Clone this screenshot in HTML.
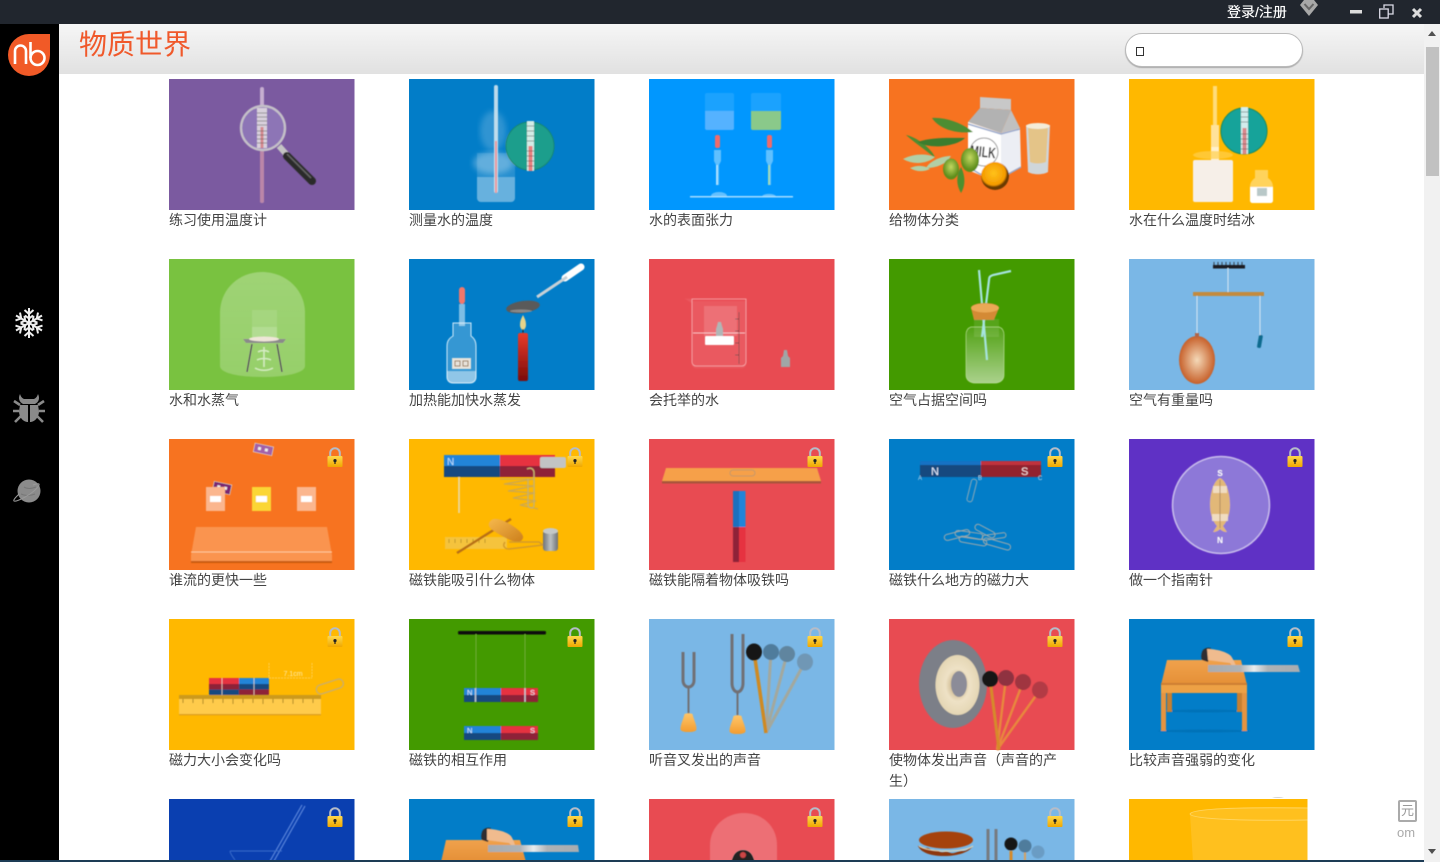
<!DOCTYPE html>
<html lang="zh-CN"><head><meta charset="utf-8"><title>物质世界</title>
<style>
html,body{margin:0;padding:0;width:1440px;height:862px;overflow:hidden;background:#fff}
svg.a{position:absolute;left:0;top:0}
.l{position:absolute;width:172px;font:14px/21px "Liberation Sans","Noto Sans CJK SC",sans-serif;color:#444}
.l b{font-weight:normal;font-family:"Noto Sans CJK TC",sans-serif}
.t{position:absolute;font:28px/36px "Liberation Sans","Noto Sans CJK SC",sans-serif;color:#f0592b;left:79px;top:27px}
.u{position:absolute;font:14px/20px "Liberation Sans","Noto Sans CJK SC",sans-serif;color:#fff;left:1227px;top:2px;text-shadow:0 0 .5px #fff}
.s{position:absolute;left:1125px;top:33px;width:176px;height:32px;background:#fff;border:1px solid #bbb;border-radius:17px;box-shadow:0 1px 1px #aaa}
.s i{position:absolute;left:10px;top:13px;width:6px;height:7px;border:1px solid #333}
.w{position:absolute;left:1398px;top:800px;width:15px;height:18px;border:2px solid #aaa;border-radius:2px;font:13px/18px "Liberation Sans","Noto Sans CJK SC",sans-serif;color:#999;text-align:center}
.o{position:absolute;left:1397px;top:825px;font:13px/16px "Liberation Sans",sans-serif;color:#aaa}
</style></head><body>
<svg class="a" width="1440" height="862" viewBox="0 0 1440 862" xmlns="http://www.w3.org/2000/svg">
<defs>
<filter id="s"><feGaussianBlur stdDeviation=".45"/></filter>
<linearGradient id="hd" x1="0" y1="0" x2="0" y2="1"><stop offset="0" stop-color="#f6f6f6"/><stop offset="1" stop-color="#e1e1e1"/></linearGradient>
<linearGradient id="gold" x1="0" y1="0" x2="0" y2="1"><stop offset="0" stop-color="#ffd84a"/><stop offset="1" stop-color="#f0a800"/></linearGradient>
<linearGradient id="tbl" x1="0" y1="0" x2="0" y2="1"><stop offset="0" stop-color="#f0a24c"/><stop offset="1" stop-color="#e48f36"/></linearGradient>
<linearGradient id="gl" x1="0" y1="0" x2="0" y2="1"><stop offset="0" stop-color="#fff" stop-opacity=".08"/><stop offset="1" stop-color="#fff" stop-opacity=".55"/></linearGradient>
<linearGradient id="can" x1="0" y1="0" x2="0" y2="1"><stop offset="0" stop-color="#e83b2c"/><stop offset="1" stop-color="#7a0c08"/></linearGradient>
<linearGradient id="dome" x1="0" y1="0" x2="0" y2="1"><stop offset="0" stop-color="#fff" stop-opacity=".28"/><stop offset="1" stop-color="#fff" stop-opacity=".22"/></linearGradient>
<linearGradient id="rul" x1="0" y1="0" x2="1" y2="0"><stop offset="0" stop-color="#a8acb0"/><stop offset=".35" stop-color="#aeb2b6"/><stop offset=".5" stop-color="#e8ecee"/><stop offset=".65" stop-color="#aeb2b6"/><stop offset="1" stop-color="#a8acb0"/></linearGradient>
<linearGradient id="sil" x1="0" y1="0" x2="1" y2="0"><stop offset="0" stop-color="#6e7276"/><stop offset=".5" stop-color="#bcc0c2"/><stop offset="1" stop-color="#6e7276"/></linearGradient>
<linearGradient id="rol" x1="0" y1="0" x2="1" y2="1"><stop offset="0" stop-color="#f6b84c"/><stop offset="1" stop-color="#cc7f1c"/></linearGradient>
<linearGradient id="bs" x1="0" y1="0" x2="0" y2="1"><stop offset="0" stop-color="#ffc56a"/><stop offset="1" stop-color="#f39d30"/></linearGradient>
<radialGradient id="bal"><stop offset="0" stop-color="#f4d9b8"/><stop offset="1" stop-color="#c7602a"/></radialGradient>
<radialGradient id="org" cx=".45" cy=".4"><stop offset="0" stop-color="#ffc21a"/><stop offset=".85" stop-color="#f59a00"/><stop offset="1" stop-color="#6b3a00"/></radialGradient>
<radialGradient id="olv" cx=".5" cy=".4"><stop offset="0" stop-color="#c3d860"/><stop offset="1" stop-color="#5e8e1c"/></radialGradient>
<radialGradient id="gng"><stop offset="0" stop-color="#b89c68"/><stop offset=".55" stop-color="#eee2c6"/><stop offset="1" stop-color="#e4d6b4"/></radialGradient>
<filter id="b1"><feGaussianBlur stdDeviation="3"/></filter>
<symbol id="lk" viewBox="0 0 16 20" width="16" height="20" overflow="visible">
<path d="M3.2 10V6a4.8 4.8 0 0 1 9.6 0v4" fill="none" stroke="#b5bcc8" stroke-width="2"/>
<rect x="0.5" y="9" width="15" height="11" rx="1" fill="url(#gold)"/>
<circle cx="8" cy="13.6" r="1.6" fill="#222"/><rect x="7.4" y="14" width="1.2" height="3" fill="#222"/>
</symbol>
<g id="arm"><path d="M0 0V-15M-4.500-13L0-9L4.500-13M-4-7.500L0-4.500L4-7.500" fill="none" stroke="#eee" stroke-width="2"/></g>
</defs>

<rect x="59" y="24" width="1365" height="50" fill="url(#hd)"/>
<rect width="1440" height="24" fill="#21262e"/>
<rect y="24" width="59" height="838" fill="#000"/>
<rect x="1424" y="24" width="16" height="838" fill="#f1f1f1"/>
<rect x="1426" y="47" width="13" height="129" fill="#c1c1c1"/>
<path d="M1428 36h8l-4-5zM1428 849h8l-4 5z" fill="#505050"/>

<!-- top bar -->
<path d="M1304 0h10l4 5-9 11-9-11z" fill="#a8a8a8"/><path d="M1304.500 4l4.500 5 4.500-5" fill="none" stroke="#666" stroke-width="2"/>
<rect x="1350" y="10" width="12" height="3.500" fill="#dcdcdc"/>
<path d="M1384 8V5h9v9h-5" fill="none" stroke="#dcdce8" stroke-width="1.300"/><rect x="1379.700" y="9" width="8.500" height="9" fill="none" stroke="#dcdce8" stroke-width="1.300"/>
<path d="M1413 9l8 8M1421 9l-8 8" stroke="#ddd" stroke-width="3"/>

<!-- logo -->
<circle cx="29" cy="55" r="21" fill="#f15a27"/><rect x="29" y="34" width="21" height="21" fill="#f15a27"/>
<path d="M15 64V51a5.500 5.500 0 0 1 11 0V64" fill="none" stroke="#fff" stroke-width="2.600"/>
<path d="M30.500 42V58" fill="none" stroke="#fff" stroke-width="2.600"/><circle cx="37.500" cy="58" r="7" fill="none" stroke="#fff" stroke-width="2.600"/>

<!-- sidebar icons -->
<g transform="translate(29,323)"><use href="#arm"/><use href="#arm" transform="rotate(60)"/><use href="#arm" transform="rotate(120)"/><use href="#arm" transform="rotate(180)"/><use href="#arm" transform="rotate(240)"/><use href="#arm" transform="rotate(300)"/></g>
<g transform="translate(29,408)" fill="#8a8a8a">
<path d="M-9-14c1 3 2 4 4 5h10c2-1 3-2 4-5 2 4 1 8-3 10H-6c-4-2-5-6-3-10z"/>
<path d="M-9-3H-1V14C-6 14-10 9-10 3zM1-3H9L10 3C10 9 6 14 1 14z"/>
<path d="M-9-3l-6-4M9-3l6-4M-10 3h-6M10 3h6M-8 8l-6 6M8 8l6 6" stroke="#8a8a8a" stroke-width="2.600" fill="none"/>
</g>
<g transform="translate(29,491)"><circle r="11.500" fill="#8b8b8b"/><path d="M-5-4c3 2 7 2 12 0M-8 3c4 2 9 2 14 0" stroke="#777" fill="none"/><path d="M-10 3c-4 4-6 6-5 7 2 1 10-3 16-7s10-9 9-10c-1-1-3 0-6 1" fill="none" stroke="#9a9a9a" stroke-width="1"/></g>

<!-- ROW 1 -->
<g transform="translate(169,79)"><rect width="185.500" height="131" fill="#7b5aa0"/><g filter="url(#s)">
<rect x="91" y="8" width="4" height="116" rx="2" fill="#c6aed0"/><rect x="91" y="65" width="4" height="59" rx="2" fill="#bb86a8"/>
<circle cx="94" cy="49" r="22" fill="#8d74b6" stroke="#c4c0c8" stroke-width="2.400"/>
<rect x="88" y="29" width="10" height="40" fill="#d8d0dc"/><rect x="91.500" y="48" width="3" height="21" fill="#d68a90"/><path d="M88 34h10M88 38h10M88 42h10M88 46h10M88 52h10M88 56h10M88 60h10M88 64h10" stroke="#555" stroke-width=".6"/>
<path d="M110 67l8 9" stroke="#c4c4c4" stroke-width="6"/><path d="M118 77l25 25" stroke="#2c2c2c" stroke-width="8" stroke-linecap="round"/><path d="M118 75l24 24" stroke="#666" stroke-width="1.500"/></g></g>

<g transform="translate(409,79)"><rect width="185.500" height="131" fill="#027dc8"/><g filter="url(#s)">
<ellipse cx="84" cy="52" rx="13" ry="20" fill="#fff" opacity=".18" filter="url(#b1)"/><ellipse cx="84" cy="84" rx="20" ry="11" fill="#fff" opacity=".28" filter="url(#b1)"/>
<path d="M68 74h38v45a4 4 0 0 1-4 4H72a4 4 0 0 1-4-4z" fill="#fff" opacity=".14"/><path d="M68 98h38v21a4 4 0 0 1-4 4H72a4 4 0 0 1-4-4z" fill="#fff" opacity=".3"/>
<rect x="85" y="6" width="4" height="108" rx="2" fill="#cfe4f0" opacity=".9"/><rect x="86" y="62" width="2" height="52" fill="#e8949c"/>
<circle cx="121" cy="67" r="24" fill="#1f9e8c" stroke="#158873"/><rect x="118" y="42" width="7" height="50" fill="#d2ece6"/><rect x="119.500" y="67" width="4" height="25" fill="#e97f7d"/><path d="M118 47h7M118 52h7M118 57h7M118 62h7M118 72h7M118 77h7M118 82h7M118 87h7" stroke="#555" stroke-width=".6"/></g></g>

<g transform="translate(649,79)"><rect width="185.500" height="131" fill="#0197fe"/><g filter="url(#s)">
<rect x="56" y="14" width="29" height="37" rx="2" fill="#fff" opacity=".1"/><path d="M56 32h29v17a2 2 0 0 1-2 2H58a2 2 0 0 1-2-2z" fill="#54b2ff"/>
<rect x="102" y="14" width="30" height="37" rx="2" fill="#fff" opacity=".1"/><path d="M102 32h30v17a2 2 0 0 1-2 2h-26a2 2 0 0 1-2-2z" fill="#8ac98a"/>
<rect x="66" y="56" width="5" height="13" rx="2" fill="#f06a6a"/><rect x="118" y="56" width="5" height="13" rx="2" fill="#f06a6a"/>
<path d="M65 71h7v11l-2 4v20h-3V86l-2-4zM117 71h7v11l-2 4v20h-3V86l-2-4z" fill="#7fcdff" opacity=".75"/>
<path d="M68 86v20" stroke="#bfe8ff" stroke-width="1.500"/><path d="M120 86v20" stroke="#b4e0a0" stroke-width="1.500"/>
<rect x="41" y="117" width="103" height="1.500" fill="#a6dcff"/><path d="M62 117a8 4 0 0 1 16 0zM113 117a8 4 0 0 1 14 0z" fill="#8bd2ff" opacity=".7"/></g></g>

<g transform="translate(889,79)"><rect width="185.500" height="131" fill="#f77320"/><g filter="url(#s)">
<path d="M91 18l31 2v11l-31-2z" fill="#c8c8c8"/>
<path d="M91 29L79 43l33 11 10-23z" fill="#b2b2b2"/><path d="M122 31l9 18-19 5z" fill="#c0c0c0"/>
<path d="M79 43l33 11v46l-21-4-12-5z" fill="#fff"/><path d="M112 54l19-5 1 39-20 12z" fill="#eceef4"/>
<path d="M79 45l33 10 19-5M81 89l10 6 21 4 20-11" fill="none" stroke="#98a8cc" stroke-width="1.500"/>
<circle cx="95" cy="73" r="14" fill="none" stroke="#999" stroke-width="1"/>
<text x="81" y="78" textLength="26" lengthAdjust="spacingAndGlyphs" font-family="Liberation Sans,sans-serif" font-weight="bold" font-size="15" fill="#3c3c3c" transform="rotate(6 94 72)">MILK</text>
<path d="M137 46h24l-2 47c-5 3-15 3-20 0z" fill="#cfd6da"/><path d="M139 49h20l-2 34c-5 2-12 2-16 0z" fill="#e4c488"/><ellipse cx="149" cy="47" rx="12" ry="3" fill="#f4ecd8"/>
<path d="M43 39c14-1 30 5 41 14-17 2-34-3-41-14z" fill="#4e8d32"/><path d="M17 56c9 8 21 16 29 23-1-6-15-20-29-23z" fill="#4e8d32"/>
<path d="M29 63c14-5 32-4 47-4-8 8-34 12-47 4z" fill="#3b7d2d"/>
<path d="M14 80c10-5 22-6 32-2-8 7-22 8-32 2zM37 89c4-7 15-12 25-12-5 8-14 12-25 12zM21 89c7-3 14-3 20 1-6 3-14 3-20-1z" fill="#b2cfa5"/>
<path d="M72 88c4 8 5 18 0 26-5-8-5-18 0-26z" fill="#4d8f2e"/>
<ellipse cx="81" cy="81" rx="9" ry="12" fill="url(#olv)"/><ellipse cx="62" cy="90" rx="8" ry="10.500" fill="url(#olv)"/><circle cx="106" cy="97" r="14" fill="url(#org)"/></g></g>

<g transform="translate(1129,79)"><rect width="185.500" height="131" fill="#ffb800"/><g filter="url(#s)">
<rect x="84" y="7" width="4" height="62" fill="#ffdc7a"/><rect x="82" y="46" width="8" height="36" fill="#ffe29a"/><path d="M82 68h8v13h-8z" fill="#fff" opacity=".5"/>
<ellipse cx="84" cy="76" rx="20" ry="4" fill="#ffcf4d" opacity=".7"/>
<rect x="64" y="81" width="40" height="42" rx="2" fill="#f6efe8"/>
<circle cx="115" cy="52" r="23" fill="#17a39a" stroke="#128a60"/><rect x="112" y="28" width="7" height="47" fill="#d2ecec"/><rect x="113.500" y="49" width="4" height="26" fill="#d9888c"/><path d="M112 33h7M112 38h7M112 43h7M112 55h7M112 60h7M112 65h7M112 70h7" stroke="#555" stroke-width=".6"/>
<path d="M126 91h13v8c3 2 5 5 5 9v13c0 2-1 3-3 3h-17c-2 0-3-1-3-3v-13c0-4 2-7 5-9z" fill="#ffd35c"/><path d="M121 108h23v13c0 2-1 3-3 3h-17c-2 0-3-1-3-3z" fill="#fff"/><rect x="128" y="109" width="10" height="8" fill="#b8c8c8"/></g></g>

<!-- ROW 2 -->
<g transform="translate(169,259)"><rect width="185.500" height="131" fill="#79c240"/><g filter="url(#s)">
<path d="M51 107V54c0-24 19-41 42-41s43 17 43 41v53c0 7-19 11-43 11s-42-4-42-11z" fill="url(#dome)"/>
<path d="M83 51h25v30H83z" fill="#fff" opacity=".1"/><path d="M83 68h25v14H83z" fill="#fff" opacity=".16"/>
<path d="M74 80h43l-3 4H77z" fill="#8a8a8a"/><ellipse cx="95" cy="80" rx="15" ry="2.500" fill="#efe6d8"/>
<path d="M83 85l-5 28M108 85l5 28" stroke="#555" stroke-width="1.500"/>
<path d="M95 88v20M88 101c4-2 10-2 14 0M89 93c3-2 8-2 11 0M86 109c5 3 13 3 18 0" stroke="#fff" stroke-width="1.600" fill="none" opacity=".6"/></g></g>

<g transform="translate(409,259)"><rect width="185.500" height="131" fill="#027dc8"/><g filter="url(#s)">
<path d="M50 45h6v22H50z" fill="#7dbde4"/><rect x="50" y="28" width="6" height="17" rx="3" fill="#f1776a"/>
<path d="M44 64h18v13c4 3 5 6 5 11v30c0 4-3 6-6 6H44c-3 0-6-2-6-6V88c0-5 1-8 6-11z" fill="#fff" fill-opacity=".2" stroke="#cfeafa"/>
<path d="M38 112h29v6c0 4-3 6-6 6H44c-3 0-6-2-6-6z" fill="#fff" opacity=".45"/>
<rect x="43" y="99" width="19" height="11" fill="#e8e3dc"/><path d="M46 102h5v5h-5zM54 102h5v5h-5z" fill="none" stroke="#9a7d5a"/>
<path d="M156 19l16-11" stroke="#fff" stroke-width="7" stroke-linecap="round"/><path d="M128 38l30-20" stroke="#c8d0d6" stroke-width="3"/>
<ellipse cx="114" cy="48" rx="17" ry="6" fill="#5a5a5a" transform="rotate(-8 114 48)"/><ellipse cx="112" cy="52" rx="11" ry="1.500" fill="#aaa" opacity=".6"/>
<path d="M114 56c2 4 3 6 3 10 0 3-2 5-3 5s-3-2-3-5c0-4 1-6 3-10z" fill="#e7d48a"/><rect x="113.500" y="70" width="1" height="5" fill="#222"/>
<rect x="109" y="74" width="10" height="48" rx="2" fill="url(#can)"/></g></g>

<g transform="translate(649,259)"><rect width="185.500" height="131" fill="#e84b52"/><g filter="url(#s)">
<path d="M37 40h5l1 2h54v63a4 4 0 0 1-4 4H47a4 4 0 0 1-4-4V44z" fill="#fff" opacity=".08" stroke="#f8c2c4"/>
<path d="M43 40h54v63a4 4 0 0 1-4 4H47a4 4 0 0 1-4-4z" fill="none" stroke="#f7b2b4" stroke-width=".8"/>
<path d="M44 74h52" stroke="#f9c9ca"/><rect x="55" y="47" width="33" height="30" fill="#fff" opacity=".14"/>
<path d="M90 53v52M86 60h4M86 72h4M86 84h4M86 96h4" stroke="#5c2a2a" stroke-width=".9" opacity=".6"/>
<rect x="56" y="77" width="29" height="9" rx="1" fill="#fff"/>
<path d="M68 67l1-4h3l1 4 1 3v7h-7v-7z" fill="#b0b6b6"/><path d="M134 97l1-6h3l1 6 2 2v9h-9v-9z" fill="#a0a6a6"/></g></g>

<g transform="translate(889,259)"><rect width="185.500" height="131" fill="#439a00"/><g filter="url(#s)">
<path d="M85 60h25v18H85z" fill="#fff" opacity=".1"/>
<path d="M82 68c-3 1-5 3-5 8v40c0 5 4 8 9 8h20c5 0 9-3 9-8V76c0-5-2-7-5-8z" fill="url(#gl)" stroke="#b4dc90" stroke-width=".7"/>
<path d="M90 11l8 90" stroke="#a6e4e0" stroke-width="2.200"/><path d="M122 12l-18 4c-3 1-4 2-4 5l-7 57" fill="none" stroke="#a6e4e0" stroke-width="2.200"/>
<path d="M85 61h20l5-12c0-3-6-5-14-5s-14 2-14 5z" fill="#d48a36"/><ellipse cx="96" cy="49" rx="14" ry="4.500" fill="#eaa956"/></g></g>

<g transform="translate(1129,259)"><rect width="185.500" height="131" fill="#7ab7e6"/><g filter="url(#s)">
<rect x="84" y="6" width="32" height="3.500" fill="#1a1a20"/><path d="M85 6V3M89 6V3M93 6V3M97 6V3M101 6V3M105 6V3M109 6V3M113 6V3" stroke="#222" stroke-width=".8"/>
<path d="M99 9v25M68 36v38M131 36v40" stroke="#d8e6f2" stroke-width="1"/>
<rect x="64" y="33" width="71" height="4" fill="#c48a3c"/>
<ellipse cx="68" cy="101" rx="18" ry="24" fill="url(#bal)"/><rect x="66" y="74" width="4" height="4" fill="#b0654a"/>
<rect x="129" y="76" width="4" height="13" rx="1.500" fill="#0e6b8e" transform="rotate(10 131 82)"/></g></g>

<!-- ROW 3 -->
<g transform="translate(169,439)"><rect width="185.500" height="131" fill="#f77320"/><g filter="url(#s)">
<g transform="rotate(12 95 10)"><rect x="85" y="6" width="19" height="9" fill="#a360a8" stroke="#eee" stroke-width=".5"/><path d="M89 9h3v3h-3zM96 9h3v3h-3z" fill="#eee"/></g>
<g transform="rotate(12 53 49)"><rect x="44" y="44" width="18" height="10" fill="#7a2772" stroke="#eee" stroke-width=".5"/><path d="M48 47h3v3h-3zM55 47h3v3h-3z" fill="#eee"/></g>
<rect x="37" y="48" width="19" height="24" fill="#fbb68e"/><rect x="41" y="57" width="11" height="6" fill="#fff"/>
<rect x="83" y="48" width="19" height="24" fill="#fbd634"/><rect x="87" y="57" width="11" height="6" fill="#fff"/>
<rect x="128" y="48" width="19" height="24" fill="#fbb68e"/><rect x="132" y="57" width="11" height="6" fill="#fff"/>
<path d="M27 88h131l5 28v7H22v-7z" fill="#fa9450"/><rect x="22" y="122" width="141" height="2" fill="#c95c10"/><path d="M22 113h141" stroke="#ffc99c"/></g></g>

<g transform="translate(409,439)"><rect width="185.500" height="131" fill="#ffb800"/><g filter="url(#s)">
<rect x="35" y="16" width="56" height="11" fill="#2484d8"/><rect x="35" y="27" width="56" height="11" fill="#144a80"/>
<rect x="91" y="16" width="55" height="11" fill="#e63340"/><rect x="91" y="27" width="55" height="11" fill="#8e2338"/>
<text x="38" y="26" font-family="Liberation Sans,sans-serif" font-size="10" fill="#bfe0ff">N</text>
<path d="M50 38v36" stroke="#e8dcb4" stroke-width="1.500"/>
<path d="M91 40l34 0-30 5 30 2-26 5 27 2-22 5 23 3-16 4 18 4" fill="none" stroke="#cda850" stroke-width="1.300"/>
<path d="M118 30c4-2 7 0 7 4v32c0 4-5 4-6 0V40" fill="none" stroke="#c6b070" stroke-width="1.400"/>
<rect x="131" y="18" width="26" height="11" rx="2" fill="#c2c4c4"/>
<rect x="36" y="98" width="62" height="12" fill="#f5c33c"/><path d="M40 100v4M46 100v4M52 100v4M58 100v4M64 100v4M70 100v4M76 100v4" stroke="#9a7a18" stroke-width=".6"/>
<path d="M102 80L48 114" stroke="#b87016" stroke-width="2.500"/>
<path d="M80 84c3-6 9-5 19 0 9 5 16 11 15 15-2 6-10 4-19-1s-17-9-15-14z" fill="url(#rol)"/>
<path d="M96 103c-3 4 0 7 4 7l34-4-4-3-30 0" fill="none" stroke="#d39a2c" stroke-width="1.500"/>
<rect x="134" y="91" width="15" height="21" rx="3" fill="url(#sil)"/><ellipse cx="141.500" cy="92" rx="7.500" ry="3" fill="#c4c8c8"/></g></g>

<g transform="translate(649,439)"><rect width="185.500" height="131" fill="#e84b52"/><g filter="url(#s)">
<path d="M17 29h151l4 13H13z" fill="#f6a04a"/><rect x="13" y="42" width="159" height="2.500" fill="#a8553a"/>
<rect x="84" y="52" width="6.500" height="36" fill="#1e70be"/><rect x="90" y="52" width="6.500" height="36" fill="#2484d8"/>
<rect x="84" y="88" width="6.500" height="35" fill="#8e2338"/><rect x="90" y="88" width="6.500" height="35" fill="#e63340"/>
<rect x="81" y="31" width="25" height="6" rx="3" fill="none" stroke="#c49868"/></g></g>

<g transform="translate(889,439)"><rect width="185.500" height="131" fill="#027dc8"/><g filter="url(#s)">
<rect x="31" y="22" width="61" height="4" fill="#1872c4"/><rect x="31" y="26" width="61" height="12" fill="#13487f"/>
<rect x="92" y="22" width="60" height="4" fill="#c0303c"/><rect x="92" y="26" width="60" height="12" fill="#93222e"/>
<text x="42" y="36" font-family="Liberation Sans,sans-serif" font-size="11" fill="#e8f0ff">N</text>
<text x="132" y="36" font-family="Liberation Sans,sans-serif" font-size="11" fill="#f8e0e0">S</text>
<text x="29" y="41" font-family="Liberation Sans,sans-serif" font-size="6" fill="#bcd8ec">A</text><text x="89" y="41" font-family="Liberation Sans,sans-serif" font-size="6" fill="#bcd8ec">B</text><text x="149" y="41" font-family="Liberation Sans,sans-serif" font-size="6" fill="#bcd8ec">C</text>
<rect x="80" y="40" width="5.500" height="23" rx="2.500" fill="none" stroke="#8aa8b8" transform="rotate(14 83 52)"/>
<g fill="none" stroke="#9aa8ac" stroke-width="1"><rect x="55" y="93" width="26" height="6" rx="3" transform="rotate(-14 68 96)"/><rect x="70" y="99" width="28" height="6" rx="3" transform="rotate(10 84 102)"/><rect x="85" y="89" width="22" height="6" rx="3" transform="rotate(28 96 92)"/><rect x="94" y="102" width="28" height="6" rx="3" transform="rotate(16 108 105)"/><rect x="66" y="93" width="28" height="6" rx="3" transform="rotate(8 80 96)"/><rect x="93" y="95" width="24" height="5" rx="2.500" transform="rotate(-8 105 97)"/></g></g></g>

<g transform="translate(1129,439)"><rect width="185.500" height="131" fill="#5f31c5"/><g filter="url(#s)">
<circle cx="92" cy="66" r="48.500" fill="#8d78d8" stroke="#c8bcec" stroke-width="1.500"/>
<path d="M91 39c6 2 10 15 10 27 0 9-3 17-7 21l4 6c-3 0-5-1-7-3-2 2-4 3-7 3l4-6c-4-4-7-12-7-21 0-12 4-25 10-27z" fill="#e2b878"/>
<rect x="84" y="47" width="14" height="7" fill="#f2e2cc" opacity=".85"/><rect x="83" y="75" width="16" height="7" fill="#f2e2cc" opacity=".85"/><path d="M91 41v48" stroke="#a8845a" stroke-width=".8"/>
<text x="91" y="37" text-anchor="middle" font-family="Liberation Sans,sans-serif" font-size="8" font-weight="bold" fill="#fff">S</text><text x="91" y="104" text-anchor="middle" font-family="Liberation Sans,sans-serif" font-size="8" font-weight="bold" fill="#fff">N</text></g></g>

<!-- ROW 4 -->
<g transform="translate(169,619)"><rect width="185.500" height="131" fill="#ffb800"/><g filter="url(#s)">
<rect x="40" y="59" width="30" height="6" fill="#e63340"/><rect x="70" y="59" width="30" height="6" fill="#2484d8"/>
<rect x="40" y="65" width="30" height="5.500" fill="#8e2338"/><rect x="70" y="65" width="30" height="5.500" fill="#144a80"/>
<rect x="40" y="70.500" width="30" height="5.500" fill="#144a80"/><rect x="70" y="70.500" width="30" height="5.500" fill="#8e2338"/>
<path d="M53 59v17M85 59v17" stroke="#f0e0d0" stroke-width=".7"/>
<path d="M100 59h43M100 44v15M143 44v15" stroke="#ffd970" stroke-width=".7" stroke-dasharray="2 1"/>
<text x="124" y="57" text-anchor="middle" font-family="Liberation Sans,sans-serif" font-size="7" fill="#ffecb0">7.1cm</text>
<rect x="147" y="63" width="28" height="9" rx="4.500" fill="none" stroke="#c8ad70" stroke-width="1.300" transform="rotate(-18 161 68)"/>
<rect x="10" y="76" width="142" height="4" fill="#cc9a1c"/><rect x="10" y="80" width="142" height="15" fill="#ffcb4c"/><rect x="10" y="95" width="142" height="1.300" fill="#dca020"/>
<path d="M14 80v4M24 80v4M34 80v5M44 80v4M54 80v4M64 80v5M74 80v4M84 80v4M94 80v5M104 80v4M114 80v4M124 80v5M134 80v4M144 80v4" stroke="#8a6a10" stroke-width=".7"/></g></g>

<g transform="translate(409,619)"><rect width="185.500" height="131" fill="#439a00"/><g filter="url(#s)">
<rect x="49" y="12" width="88" height="3.500" rx="1.500" fill="#0a0a0a"/>
<path d="M67 15v54M116 15v54" stroke="#7cb24a" stroke-width=".8"/>
<rect x="55" y="69" width="37" height="7" fill="#2484d8"/><rect x="55" y="76" width="37" height="7" fill="#144a80"/><rect x="92" y="69" width="37" height="7" fill="#e63340"/><rect x="92" y="76" width="37" height="7" fill="#8e2338"/>
<path d="M66.500 69v14M116 69v14" stroke="#c4ccd4" stroke-width="1.400"/>
<rect x="55" y="107" width="37" height="7" fill="#2484d8"/><rect x="55" y="114" width="37" height="7" fill="#144a80"/><rect x="92" y="107" width="37" height="7" fill="#e63340"/><rect x="92" y="114" width="37" height="7" fill="#8e2338"/>
<g font-family="Liberation Sans,sans-serif" font-size="7.500" fill="#e6f0ff"><text x="58" y="76">N</text><text x="121" y="76">S</text><text x="58" y="114">N</text><text x="121" y="114">S</text></g></g></g>

<g transform="translate(649,619)"><rect width="185.500" height="131" fill="#7ab7e6"/><g filter="url(#s)">
<path d="M34 33v28c0 5 3 7 5.500 7s5.500-2 5.500-7V33" fill="none" stroke="#716f74" stroke-width="3"/><rect x="38.500" y="68" width="2" height="27" fill="#716f74"/>
<path d="M35.500 95c3-1 5-1 8 0 1 5 4 10 4 15 0 2-3 3-8 3s-8-1-8-3c0-5 3-10 4-15z" fill="url(#bs)"/>
<path d="M83 15v49c0 6 3 9 5.500 9s5.500-3 5.500-9V15" fill="none" stroke="#716f74" stroke-width="3"/><rect x="87.500" y="73" width="2" height="25" fill="#716f74"/>
<path d="M84.500 97c3-1 5-1 8 0 1 5 4 10 4 15 0 2-3 3-8 3s-8-1-8-3c0-5 3-10 4-15z" fill="url(#bs)"/>
<path d="M117 114L122 33M117 114L138 35M117 114L156 43" stroke="#a3a89e" stroke-width="3"/>
<circle cx="122" cy="33" r="8" fill="#4f7b9c"/><circle cx="138" cy="35" r="8" fill="#60859f"/><ellipse cx="156" cy="43" rx="8" ry="8.500" fill="#6f97b5"/>
<path d="M105 33L117 114" stroke="#cf8a24" stroke-width="3.500"/><ellipse cx="105" cy="33" rx="8" ry="8.500" fill="#141414"/></g></g>

<g transform="translate(889,619)"><rect width="185.500" height="131" fill="#e84b52"/><g filter="url(#s)">
<ellipse cx="64" cy="65" rx="34" ry="44" fill="#7c7f88"/><ellipse cx="68.500" cy="66" rx="22" ry="30" fill="url(#gng)"/><ellipse cx="70" cy="65" rx="8" ry="13" fill="#8c8c98"/>
<path d="M108 131L117 59M108 131L134 63M108 131L151 71" stroke="#e8883e" stroke-width="2.400"/>
<circle cx="117" cy="59" r="8" fill="#8f3040"/><circle cx="134" cy="63" r="8" fill="#a03540"/><ellipse cx="151" cy="71" rx="8" ry="8.500" fill="#b23a45"/>
<path d="M101 60L110 131" stroke="#d68a2c" stroke-width="3"/><circle cx="101" cy="60" r="8" fill="#141414"/></g></g>

<g transform="translate(1129,619)"><rect width="185.500" height="131" fill="#027dc8"/><g filter="url(#s)">
<ellipse cx="75" cy="92" rx="38" ry="1.500" fill="#0272b8"/><ellipse cx="75" cy="112" rx="46" ry="1.500" fill="#0272b8"/>
<rect x="38" y="74" width="5" height="19" fill="#c57f32"/><rect x="108" y="74" width="5" height="19" fill="#c57f32"/>
<rect x="32" y="66" width="86" height="8" fill="#eda145"/><rect x="32" y="74" width="5" height="38" fill="#e59440"/><rect x="113" y="74" width="5" height="38" fill="#e59440"/>
<path d="M38 41h74l6 25H32z" fill="url(#tbl)"/><rect x="32" y="64" width="86" height="2" fill="#cc7f30"/>
<path d="M73 33c1-3 4-5 9-4l-3 14-6-2c-1-2-1-5 0-8z" fill="#2e2e30"/><path d="M78 30c10 0 20 3 24 7 2 3 4 7 5 10l-3 1-3-4-22-3z" fill="#f0bb8e"/>
<path d="M79 46h90l2 7H79z" fill="url(#rul)"/></g></g>

<!-- ROW 5 -->
<g transform="translate(169,799)"><rect width="185.500" height="63" fill="#0a3fb0"/><g filter="url(#s)">
<path d="M133 6l-32 56M136 7l-31 55" stroke="#5b86dc" stroke-width="1.200"/><path d="M61 52h52M66 61c-3-4-5-7-5-9" fill="none" stroke="#3a6cca"/></g></g>
<g transform="translate(409,799)"><rect width="185.500" height="63" fill="#027dc8"/><g filter="url(#s)">
<path d="M37 41h74l6 22H32z" fill="url(#tbl)"/>
<path d="M73 33c1-3 4-5 9-4l-3 14-6-2c-1-2-1-5 0-8z" fill="#2e2e30"/><path d="M78 30c10 0 20 3 24 7 2 3 3 6 4 9l-3 1-3-3-22-3z" fill="#f0bb8e"/>
<path d="M79 46h90l1 7H79z" fill="url(#rul)"/></g></g>
<g transform="translate(649,799)"><rect width="185.500" height="63" fill="#e84b52"/><g filter="url(#s)">
<path d="M61 63V46c0-18 15-32 34-32s33 14 33 32v17z" fill="#fff" opacity=".2"/><path d="M84 58c2-5 6-7 10-7s8 2 10 7l2 5H82z" fill="#222"/><circle cx="94" cy="56" r="3" fill="#c44"/></g></g>
<g transform="translate(889,799)"><rect width="185.500" height="63" fill="#7ab7e6"/><g filter="url(#s)">
<ellipse cx="57" cy="41" rx="27" ry="8.500" fill="#a5430c"/><path d="M29 47c3-1 4 3 8 2s4 3 8 2 5 3 10 2 6 2 10 1 5-2 9-2 6-3 10-5c-4 6-14 10-29 10s-23-4-26-10z" fill="#8d380a"/><path d="M30 47c5 3 13 5 27 5s23-2 27-5" fill="none" stroke="#f0dcb0"/>
<path d="M99 30v33M107 30v33" stroke="#777a80" stroke-width="3"/>
<path d="M122 52v11" stroke="#d68a2c" stroke-width="3"/><path d="M136 52v11" stroke="#d6a060" stroke-width="2"/>
<circle cx="122" cy="45" r="6.500" fill="#141414"/><circle cx="136" cy="47" r="6.500" fill="#4f7b9c"/><circle cx="149" cy="53" r="6.500" fill="#6a9cc4"/></g></g>
<g transform="translate(1129,799)"><rect width="178.500" height="63" fill="#ffb800"/><path d="M61 15c2-5 40-7 117.500-6v54H64z" fill="#ffc01e"/><path d="M61 15c2-5 40-7 117.500-6M61 15c2 5 50 7 117.500 6" fill="none" stroke="#ffd45e"/></g>
<path d="M1272 798a8 2 0 0 1 12 0" fill="#bbb"/>

<rect y="860" x="0" width="1424" height="2" fill="#1d3c55"/>
</svg>

<div class="t">物质世界</div>
<div class="u">登录/注册</div>
<div class="s"><i></i></div>
<div class="w">元</div>
<div class="o">om</div>

<div class="l" style="left:169px;top:210px">练习使用温度计</div>
<div class="l" style="left:409px;top:210px">测量水的温度</div>
<div class="l" style="left:649px;top:210px">水的表面张力</div>
<div class="l" style="left:889px;top:210px">给物体分类</div>
<div class="l" style="left:1129px;top:210px">水在什么温度时结冰</div>
<div class="l" style="left:169px;top:390px">水和水蒸气</div>
<div class="l" style="left:409px;top:390px">加热能加快水蒸发</div>
<div class="l" style="left:649px;top:390px">会托举的水</div>
<div class="l" style="left:889px;top:390px">空气占据空间吗</div>
<div class="l" style="left:1129px;top:390px">空气有重量吗</div>
<div class="l" style="left:169px;top:570px">谁流的更快一些</div>
<div class="l" style="left:409px;top:570px">磁铁能吸引什么物体</div>
<div class="l" style="left:649px;top:570px">磁铁能隔着物体吸铁吗</div>
<div class="l" style="left:889px;top:570px">磁铁什么地方的磁力大</div>
<div class="l" style="left:1129px;top:570px">做一个指南针</div>
<div class="l" style="left:169px;top:750px">磁力大小会变化吗</div>
<div class="l" style="left:409px;top:750px">磁铁的相互作用</div>
<div class="l" style="left:649px;top:750px">听音叉发出的声音</div>
<div class="l" style="left:889px;top:750px">使物体发出声音<b>（</b>声音的产生<b>）</b></div>
<div class="l" style="left:1129px;top:750px">比较声音强弱的变化</div>

<svg class="a" width="1440" height="860" viewBox="0 0 1440 860" xmlns="http://www.w3.org/2000/svg">
<use href="#lk" x="327" y="447"/><use href="#lk" x="567" y="447"/><use href="#lk" x="807" y="447"/><use href="#lk" x="1047" y="447"/><use href="#lk" x="1287" y="447"/>
<use href="#lk" x="327" y="627"/><use href="#lk" x="567" y="627"/><use href="#lk" x="807" y="627"/><use href="#lk" x="1047" y="627"/><use href="#lk" x="1287" y="627"/>
<use href="#lk" x="327" y="807"/><use href="#lk" x="567" y="807"/><use href="#lk" x="807" y="807"/><use href="#lk" x="1047" y="807"/>
</svg>
</body></html>
